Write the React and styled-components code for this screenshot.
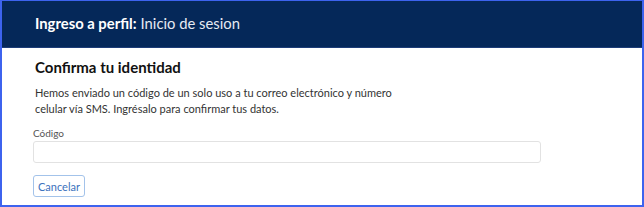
import React from "react";
import styled, { createGlobalStyle } from "styled-components";

const Global = createGlobalStyle`
  html, body { margin: 0; padding: 0; background: #ffffff; }
  body { font-family: "Lato", "Liberation Sans", sans-serif; }
  * { box-sizing: border-box; }
`;

const Frame = styled.div`
  width: 644px;
  height: 207px;
  border: 2px solid #3d63ee;
  border-top-width: 1px;
  background: #ffffff;
  display: flex;
  flex-direction: column;
  overflow: hidden;
`;

const Header = styled.header`
  height: 47px;
  flex-shrink: 0;
  background: #052859;
  border-bottom: 1px solid #1d3d78;
  display: flex;
  align-items: center;
  padding-left: 33px;
  padding-bottom: 2px;
  color: #ffffff;
  font-size: 14.8px;
  font-family: "Lato", sans-serif;
`;

const Strong = styled.span`
  font-weight: 700;
  margin-right: 4px;
`;

const Light = styled.span`
  font-weight: 400;
  color: #e6ebf3;
`;

const Body = styled.main`
  padding: 10px 0 0 31px;
  display: flex;
  flex-direction: column;
  font-family: "Lato", sans-serif;
`;

const Title = styled.h1`
  margin: 0 0 0 2px;
  font-size: 15px;
  font-weight: 700;
  color: #111111;
  line-height: 18px;
`;

const Text = styled.p`
  margin: 9px 0 0 2px;
  width: 372px;
  font-size: 11px;
  line-height: 16px;
  color: #333333;
`;

const Label = styled.label`
  margin-top: 10px;
  font-size: 10px;
  color: #555555;
  line-height: 13px;
`;

const Input = styled.input`
  margin-top: 1px;
  width: 508px;
  height: 22px;
  border: 1px solid #e2e2e2;
  border-radius: 3px;
  outline: none;
`;

const Button = styled.button`
  margin-top: 12px;
  align-self: flex-start;
  height: 22px;
  padding: 0 4px;
  border: 1px solid #a3c3ea;
  border-radius: 3px;
  background: #ffffff;
  color: #3c72bd;
  font-family: "Lato", sans-serif;
  font-size: 11px;
`;

export default function App() {
  return (
    <>
      <Global />
      <Frame>
        <Header>
          <Strong>Ingreso a perfil:</Strong>
          <Light>Inicio de sesion</Light>
        </Header>
        <Body>
          <Title>Confirma tu identidad</Title>
          <Text>
            Hemos enviado un código de un solo uso a tu correo electrónico y número celular vía SMS. Ingrésalo para confirmar tus datos.
          </Text>
          <Label>Código</Label>
          <Input type="text" />
          <Button>Cancelar</Button>
        </Body>
      </Frame>
    </>
  );
}
